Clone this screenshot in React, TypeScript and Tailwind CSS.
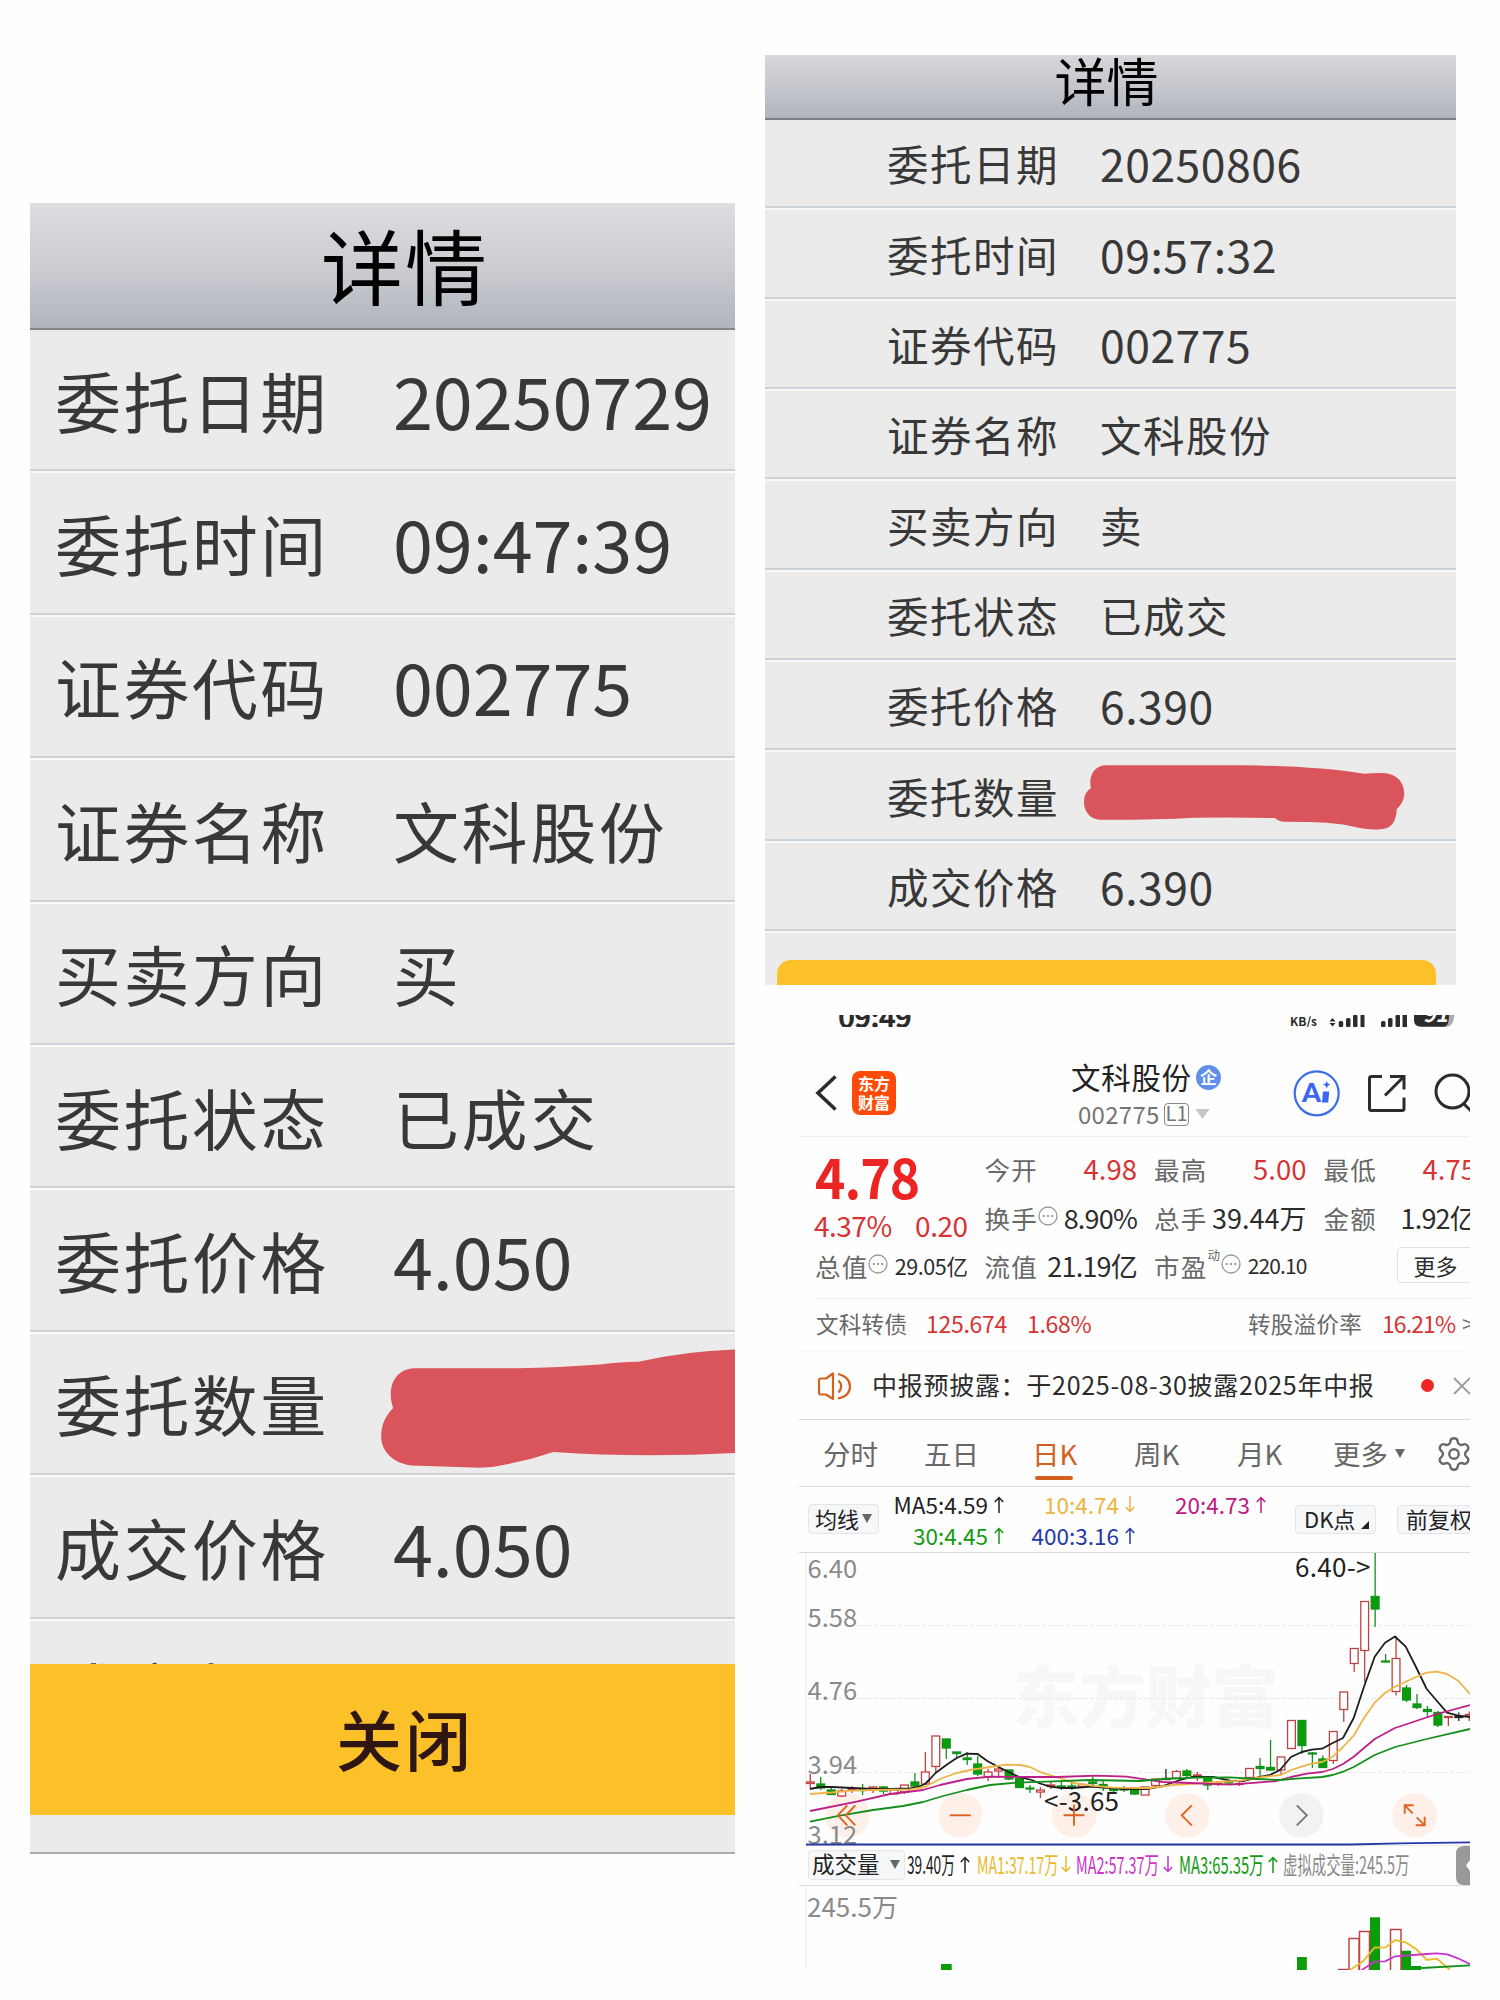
import { ReactNode } from "react"
import { Settings } from "lucide-react"

const leftRows = [
  ["委托日期", "20250729"],
  ["委托时间", "09:47:39"],
  ["证券代码", "002775"],
  ["证券名称", "文科股份"],
  ["买卖方向", "买"],
  ["委托状态", "已成交"],
  ["委托价格", "4.050"],
  ["委托数量", ""],
  ["成交价格", "4.050"],
  ["成交数量", ""],
]

const rightRows = [
  ["委托日期", "20250806"],
  ["委托时间", "09:57:32"],
  ["证券代码", "002775"],
  ["证券名称", "文科股份"],
  ["买卖方向", "卖"],
  ["委托状态", "已成交"],
  ["委托价格", "6.390"],
  ["委托数量", ""],
  ["成交价格", "6.390"],
  ["成交数量", ""],
]

const isNumeric = (value: string) => /^[\d.:]+$/.test(value)

function BuyDetail() {
  return (
    <section className="relative mt-[203px] ml-[30px] flex h-[1651px] w-[705px] shrink-0 flex-col overflow-hidden border-b-2 border-[#a9abad] bg-[#ebebeb]">
      <header className="flex h-[127px] shrink-0 items-center justify-center border-b-2 border-[#85868a] bg-linear-to-b from-[#dddee2] via-[#c9cbd0] via-55% to-[#b0b4bc] pl-[45px] text-[82px] leading-none tracking-[2px] text-black">
        <span className="-mt-[3px]">详情</span>
      </header>
      <div className="h-[1333.5px] shrink-0 overflow-hidden">
        {leftRows.map(([label, value]) => (
          <div
            key={label}
            className="flex h-[143.4px] items-center border-b-2 border-[#f8fafb] pb-[4px] pl-[25px] text-[#383838] shadow-[inset_0_-2px_0_#cbd3d8] last:pb-[2px]"
          >
            <span className="w-[338px] shrink-0 text-[66px] leading-none tracking-[2.4px]">{label}</span>
            <span
              className={
                isNumeric(value)
                  ? "text-[72px] leading-none tracking-[-0.1px] whitespace-nowrap"
                  : "text-[66px] leading-none tracking-[2.6px] whitespace-nowrap"
              }
            >
              {value}
            </span>
          </div>
        ))}
      </div>
      <button className="flex h-[151.5px] shrink-0 items-center justify-center bg-[#fcc128] pl-[45px] text-[66px] leading-none font-medium tracking-[3px] text-[#2f1613]">
        <span className="-mt-[4px]">关闭</span>
      </button>
      {/* marker stroke over the quantity */}
      <svg className="absolute top-[1127px] left-[340px]" width="365" height="160" viewBox="370 1330 365 160">
        <path
          d="M413.7 1368.3H516.6Q560 1367.5 600 1364.5Q625 1361.5 638.5 1361.8Q684 1351 735 1349.4V1453Q640 1458 553.4 1452Q530 1460 507 1464.3Q490 1468.5 473.5 1467.6L411.3 1465.4C392 1463 381 1450 381.2 1436.3C381 1425 386 1415 393.2 1408C386 1388 395 1369 413.7 1368.3Z"
          fill="#da555b"
        />
      </svg>
    </section>
  )
}

function SellDetail() {
  return (
    <section className="relative flex h-[930px] w-[691px] flex-col overflow-hidden bg-[#ebebeb]">
      <header className="flex h-[65px] shrink-0 items-center justify-center border-b-2 border-[#7d7e83] bg-linear-to-b from-[#d6d8db] via-[#c3c5cb] via-55% to-[#b0b4bc] pr-[8px] text-[52px] leading-none text-black">
        <span className="-mt-[14px]">详情</span>
      </header>
      <div className="h-[839.5px] shrink-0 overflow-hidden">
        {rightRows.map(([label, value]) => (
          <div
            key={label}
            className="flex h-[90.35px] items-center border-b-2 border-[#f6f8f9] pl-[122px] text-[#383838] shadow-[inset_0_-2px_0_#cbd3d8] last:pt-[2px]"
          >
            <span className="w-[213px] shrink-0 text-[41.5px] leading-none tracking-[1.5px]">{label}</span>
            <span
              className={
                isNumeric(value)
                  ? "-mt-[1px] text-[44.5px] leading-none tracking-[0.5px] whitespace-nowrap"
                  : "text-[41.5px] leading-none tracking-[1.5px] whitespace-nowrap"
              }
            >
              {value}
            </span>
          </div>
        ))}
      </div>
      <svg className="absolute top-[700px] left-[305px]" width="350" height="80" viewBox="1070 755 350 80">
        <path
          d="M1106.3 765.3H1242.7Q1315 766 1364.6 773.7Q1376 772.5 1386 773.3C1398 775 1404 783 1404.3 794Q1404 802 1396.7 809.3Q1396 829 1380.4 829.3Q1368 830 1359.8 828L1343 824.5Q1325 821.7 1306 822L1284.3 821.7Q1279 821.5 1274.7 818Q1230 817 1194.8 817.7Q1150 820 1099.2 819.7C1089 819 1084 810 1083.9 801.7Q1084 792 1091 788.3C1088 775 1095 765.5 1106.3 765.3Z"
          fill="#da555b"
        />
      </svg>
      <div className="mr-[20px] ml-[12px] h-[26px] shrink-0 rounded-t-[14px] bg-[#fcc128]" />
    </section>
  )
}

function Dots() {
  return (
    <svg className="mt-[-3px] shrink-0" width="20" height="20" viewBox="0 0 20 20">
      <circle cx="10" cy="10" r="9" fill="none" stroke="#999" strokeWidth="1.3" />
      <g fill="#888">
        <circle cx="5.8" cy="10" r="1.1" />
        <circle cx="10" cy="10" r="1.1" />
        <circle cx="14.2" cy="10" r="1.1" />
      </g>
    </svg>
  )
}

function StatusBar() {
  return (
    <div className="flex h-[12px] items-end overflow-hidden pl-[39px] text-[#2c2c2c]">
      <span className="mb-[-2px] w-[452px] text-[29px] leading-[27px] font-bold tracking-[-1px]">09:49</span>
      <span className="mb-[-1px] w-[39px] text-[12px] leading-[14px] font-bold">KB/s</span>
      <svg width="140" height="12" viewBox="1328 1015 140 12">
        <g fill="#2c2c2c">
          <path d="M1328.500 1021.500l3-3.500 3 3.500zM1328.500 1023l3 3.500 3-3.500z" />
          <rect x="1337.700" y="1021" width="4.500" height="6" rx="1.500" />
          <rect x="1345" y="1018" width="4.500" height="9" rx="1.500" />
          <rect x="1352" y="1015" width="4.500" height="12" rx="1" />
          <rect x="1359.500" y="1015" width="4" height="12" />
          <rect x="1380" y="1021" width="4.500" height="6" rx="1.500" />
          <rect x="1387" y="1018" width="4.500" height="9" rx="1.500" />
          <rect x="1394.500" y="1015" width="4.500" height="12" rx="1" />
          <rect x="1401.500" y="1015" width="4.500" height="12" />
        </g>
        <path d="M1436 1015H1453.500Q1452 1026.700 1446 1026.700H1436z" fill="#aaa" />
        <path d="M1413 1015H1448Q1448 1026.700 1443 1026.700H1420Q1413 1026.700 1413 1020z" fill="#2c2c2c" />
        <text x="1422" y="1022" fontSize="21" fontWeight="700" fontStyle="italic" fill="#fff">
          91
        </text>
      </svg>
    </div>
  )
}

function StockHeader() {
  return (
    <div className="mt-[24px] flex h-[86px] items-center border-b border-[#efefef] pb-[1px] pl-[16px]">
      <svg width="22" height="38" viewBox="0 0 22 38" fill="none" stroke="#2c2c2c" strokeWidth="3.600">
        <path d="M20.500 2.500L3 19L20.500 35.500" />
      </svg>
      <div className="ml-[15px] grid size-[44px] grid-rows-2 rounded-[8px] bg-[#ff4a08] py-[3px] text-center text-[16px] leading-[18px] font-bold text-white">
        <span>东方</span>
        <span>财富</span>
      </div>
      <div className="mt-[4px] ml-[175px] flex w-[150px] flex-col">
        <div className="flex h-[38px] items-center">
          <span className="w-[125px] shrink-0 text-[29.5px] leading-none tracking-[0.700px] whitespace-nowrap text-[#222]">文科股份</span>
          <span className="flex size-[25px] shrink-0 items-center justify-center rounded-full bg-[#5f8fe8] pb-[2px] text-[17px] leading-none font-bold text-white">
            企
          </span>
        </div>
        <div className="flex h-[36px] items-center pl-[7px] text-[#757575]">
          <span className="w-[86px] text-[24px] leading-none tracking-[0.3px]">002775</span>
          <span className="flex h-[23px] w-[25px] items-center justify-center rounded-[4px] border border-[#888] pb-[2px] text-[20px] leading-none">
            L1
          </span>
          <svg className="ml-[6px]" width="15" height="10" viewBox="0 0 15 10">
            <path d="M0.500 0h14l-7 10z" fill="#c6c6c6" />
          </svg>
        </div>
      </div>
      <svg className="ml-[70px]" width="179" height="50" viewBox="1291 1068 179 50" fill="none">
        <circle cx="1316.700" cy="1093.300" r="22" stroke="#3d6ceb" strokeWidth="2.200" />
        <text x="1302" y="1102" fontSize="27" fontWeight="900" fill="#3a66f2" className="font-['Lato']">
          A
        </text>
        <path d="M1323 1091.500h6.200l-1 11h-6.200z" fill="#3a66f2" />
        <path d="M1326.700 1081l1.200 2.600 2.600 1-2.600 1.200-1.200 2.600-1.200-2.600-2.600-1.200 2.600-1z" fill="#3a66f2" />
        <g stroke="#2c2c2c" strokeWidth="3">
          <path d="M1382 1076.500H1371.500Q1369.500 1076.500 1369.500 1078.500V1108.500Q1369.500 1110.500 1371.500 1110.500H1402Q1404 1110.500 1404 1108.500V1097.500" />
          <path d="M1390 1076.500H1404V1089.500M1403.500 1077L1385 1095.500" />
          <circle cx="1452.500" cy="1091.500" r="16.500" />
          <path d="M1463.500 1103.500L1472 1112" />
        </g>
      </svg>
    </div>
  )
}

const valueSizes = {
  red: "text-[27.500px] text-[#d63434]",
  dark: "text-[27px] text-[#2c2c2c]",
  tight: "text-[27px] tracking-[-0.800px] text-[#2c2c2c]",
  small: "text-[21.500px] tracking-[-0.400px] text-[#2c2c2c]",
  smaller: "text-[21px] tracking-[-0.900px] text-[#2c2c2c]",
}

function Cell({ label, value, kind, children }: { label: string; value: string; kind: keyof typeof valueSizes; children?: ReactNode }) {
  return (
    <div className="flex h-[48.300px] w-[152.500px] items-center justify-between leading-none whitespace-nowrap">
      <span className="flex items-center text-[25.500px] tracking-[1.200px] text-[#686868]">
        {label}
        {children}
      </span>
      <span className={valueSizes[kind]}>{value}</span>
    </div>
  )
}

function Quote() {
  return (
    <div className="ml-[16px] flex h-[162px] gap-[17px] border-b border-[#efefef] pt-[8px]">
      <div className="w-[152.500px] shrink-0">
        <div className="flex h-[60px] items-center text-[56px] leading-none font-bold tracking-[-1px] text-[#ec2424]">
          <span className="-mt-[1px] origin-left scale-x-[0.920]">4.78</span>
        </div>
        <div className="flex h-[36.600px] items-center justify-between pt-[4px] text-[28px] leading-none tracking-[-0.500px] text-[#d63434]">
          <span className="-ml-[1px]">4.37%</span>
          <span>0.20</span>
        </div>
        <Cell label="总值" value="29.05亿" kind="small">
          <Dots />
        </Cell>
      </div>
      <div className="shrink-0">
        <Cell label="今开" value="4.98" kind="red" />
        <Cell label="换手" value="8.90%" kind="tight">
          <Dots />
        </Cell>
        <Cell label="流值" value="21.19亿" kind="tight" />
      </div>
      <div className="shrink-0">
        <Cell label="最高" value="5.00" kind="red" />
        <Cell label="总手" value="39.44万" kind="dark" />
        <Cell label="市盈" value="220.10" kind="smaller">
          <span className="mr-[1px] mb-[21px] text-[12.500px] tracking-normal">动</span>
          <Dots />
        </Cell>
      </div>
      <div className="shrink-0">
        <Cell label="最低" value="4.75" kind="red" />
        <Cell label="金额" value="1.92亿" kind="tight" />
        <div className="mt-[5px] ml-[73px] flex h-[36px] w-[90px] items-center rounded-[4px] border border-[#e1e1e1] pl-[16px] text-[22px] leading-none text-[#2c2c2c]">
          更多
        </div>
      </div>
    </div>
  )
}

function BondRow() {
  return (
    <div className="flex h-[53px] items-center border-b border-[#f7f7f7] pb-[3px] pl-[17px] text-[23px] leading-none tracking-[-0.300px] whitespace-nowrap text-[#d63434]">
      <span className="w-[110px] shrink-0 text-[22.500px] tracking-[0.300px] text-[#686868]">文科转债</span>
      <span className="w-[101px] shrink-0">125.674</span>
      <span className="w-[221px] shrink-0">1.68%</span>
      <span className="w-[134px] shrink-0 text-[22.500px] tracking-[0.300px] text-[#686868]">转股溢价率</span>
      <span className="w-[80px] shrink-0 tracking-[-0.900px]">16.21%</span>
      <span className="text-[#777]">&gt;</span>
    </div>
  )
}

function NoticeRow() {
  return (
    <div className="flex h-[68px] items-center border-b border-[#dadada] pl-[18px]">
      <svg className="shrink-0" width="36" height="30" viewBox="817 1370 36 30" fill="none" stroke="#d2601e" strokeWidth="2.200">
        <path d="M833 1372.500V1398L826 1393.500H821Q819 1393.500 819 1391.500V1379.500Q819 1377.500 821 1377.500H826Z" strokeLinejoin="round" />
        <path d="M838.500 1379.500Q844 1385 838.500 1391.500M838 1373Q850 1376 850 1385.500T838 1397.500" />
      </svg>
      <span className="-mt-[2px] ml-[19px] w-[549px] shrink-0 text-[25px] leading-none tracking-[0.720px] whitespace-nowrap text-[#2c2c2c]">
        中报预披露：于2025-08-30披露2025年中报
      </span>
      <span className="size-[12.500px] shrink-0 rounded-full bg-[#f02525]" />
      <svg className="ml-[18px] shrink-0" width="20" height="20" viewBox="0 0 20 20" stroke="#9a9a9a" strokeWidth="1.800">
        <path d="M2 2L18 18M18 2L2 18" />
      </svg>
    </div>
  )
}

function Caret({ className }: { className?: string }) {
  return (
    <svg className={className} width="10" height="9" viewBox="0 0 10 9">
      <path d="M0 0h10l-5 9z" fill="#666" />
    </svg>
  )
}

function Tabs() {
  return (
    <div className="flex h-[67px] items-center border-b border-[#dadada] pt-[1px] pl-[24px] text-[27.500px] leading-none whitespace-nowrap text-[#686868]">
      <span className="w-[101px] shrink-0">分时</span>
      <span className="w-[108px] shrink-0">五日</span>
      <span className="relative w-[102px] shrink-0 text-[#d2601e]">
        日K
        <span className="absolute top-[36.500px] left-[3px] h-[4px] w-[38px] rounded-full bg-[#d2601e]" />
      </span>
      <span className="w-[103px] shrink-0">周K</span>
      <span className="w-[96px] shrink-0">月K</span>
      <span className="shrink-0">更多</span>
      <Caret className="ml-[7px] shrink-0" />
      <Settings className="ml-[30px] shrink-0" size={38} strokeWidth={1.500} color="#686868" />
    </div>
  )
}

const averages = [
  ["MA5:4.59", "↑", "text-[#222] w-[132px]"],
  ["10:4.74", "↓", "text-[#ecb440] w-[131px]"],
  ["20:4.73", "↑", "text-[#c01882] w-[131px]"],
  ["30:4.45", "↑", "text-[#129a12] w-[132px]"],
  ["400:3.16", "↑", "text-[#2438a6] w-[131px]"],
]

function Arrow({ dir }: { dir: string }) {
  return (
    <svg className="ml-[6px] shrink-0" width="10" height="17" viewBox="0 0 10 17" fill="none" stroke="currentColor" strokeWidth="1.500">
      {dir === "↑" ? <path d="M5 17V1.500M0.800 6L5 1.500L9.200 6" /> : <path d="M5 0V15.500M0.800 11L5 15.500L9.200 11" />}
    </svg>
  )
}

function AverageRow() {
  return (
    <div className="flex h-[66px] items-center border-b border-[#dadada] pl-[9px] text-[22px] leading-none whitespace-nowrap">
      <div className="mt-[-1px] flex h-[30px] w-[71px] shrink-0 items-center rounded-[4px] border border-[#e3e5ea] bg-[#f6f7f9] pb-[3px] pl-[6px] text-[#222]">
        均线
        <Caret className="mt-[2px] ml-[3px]" />
      </div>
      <div className="-ml-[7px] flex w-[394px] shrink-0 flex-wrap gap-y-[7px] text-[22.500px]">
        {averages.map(([text, dir, style]) => (
          <span key={text} className={`flex h-[24px] items-center justify-end ${style}`}>
            {text}
            <Arrow dir={dir} />
          </span>
        ))}
      </div>
      <div className="mt-[-1px] ml-[29px] flex h-[29px] w-[81px] shrink-0 items-center rounded-[4px] border border-[#e3e5ea] bg-[#f6f7f9] pb-[3px] pl-[8px] text-[#222]">
        DK点
        <svg className="mt-[14px] ml-[6px] shrink-0" width="8" height="8" viewBox="0 0 8 8">
          <path d="M8 0V8H0z" fill="#222" />
        </svg>
      </div>
      <div className="mt-[-1px] ml-[21px] flex h-[29px] w-[90px] shrink-0 items-center rounded-[4px] border border-[#e3e5ea] bg-[#f6f7f9] pb-[3px] pl-[8px] text-[#222]">
        前复权
      </div>
    </div>
  )
}

// kind, high, body top, body bottom, low: one entry per trading day
type Candle = [string, number, number, number, number]
const candles: Candle[] = [
  ["r", 1774, 1782, 1783.5, 1789],
  ["g", 1777, 1784, 1788, 1790],
  ["g", 1788, 1790, 1794.5, 1795],
  ["r", 1789, 1791, 1796, 1797],
  ["r", 1786, 1788.5, 1789.5, 1793],
  ["g", 1784, 1789.5, 1790.5, 1795],
  ["r", 1786, 1787, 1788.5, 1793],
  ["g", 1786, 1787, 1791, 1794],
  ["r", 1788, 1790, 1794, 1794],
  ["r", 1785, 1785, 1792, 1794],
  ["g", 1773, 1782, 1786, 1787],
  ["r", 1752, 1772, 1784, 1785],
  ["r", 1736, 1736, 1766.5, 1772],
  ["g", 1739, 1739, 1748, 1759],
  ["g", 1752, 1752, 1753.5, 1758],
  ["g", 1752, 1758, 1759.5, 1765],
  ["g", 1756, 1764, 1774, 1776],
  ["r", 1769, 1772, 1777, 1781],
  ["r", 1766, 1769, 1771, 1778],
  ["g", 1770, 1770, 1779, 1780],
  ["g", 1777, 1778, 1787.5, 1788],
  ["g", 1785, 1788, 1789, 1793],
  ["r", 1787, 1790, 1792, 1798],
  ["r", 1781, 1785, 1786, 1789],
  ["g", 1782, 1786, 1787, 1790],
  ["g", 1781, 1786, 1787, 1790],
  ["r", 1783, 1784.5, 1786.5, 1788],
  ["g", 1777, 1782, 1783.5, 1788],
  ["g", 1781, 1784.5, 1786, 1791],
  ["g", 1787, 1788.5, 1790.5, 1792],
  ["g", 1786, 1789, 1790, 1792],
  ["g", 1789, 1789.5, 1794, 1795],
  ["r", 1787, 1787, 1795, 1795],
  ["r", 1779, 1779, 1785.5, 1785.5],
  ["k", 1769, 1778.5, 1779.5, 1779],
  ["r", 1770, 1771.5, 1778, 1778],
  ["g", 1769, 1771, 1775.5, 1779],
  ["r", 1772, 1775, 1776, 1781],
  ["g", 1776, 1777, 1785, 1790],
  ["r", 1781, 1783.5, 1784.5, 1786],
  ["g", 1780, 1782, 1783, 1784],
  ["r", 1781, 1783.5, 1784.5, 1786],
  ["r", 1768.5, 1768.5, 1777.5, 1777.5],
  ["g", 1758, 1766.5, 1768.5, 1776],
  ["g", 1740, 1767.5, 1770, 1771],
  ["r", 1757, 1757, 1770, 1775],
  ["r", 1720.5, 1720.5, 1748.5, 1748.5],
  ["g", 1720, 1720.5, 1745.5, 1754],
  ["g", 1752, 1753, 1754, 1768],
  ["g", 1755.5, 1759, 1767.5, 1768],
  ["r", 1731.5, 1731.5, 1760.5, 1764],
  ["r", 1692, 1692, 1709.5, 1722],
  ["r", 1648.5, 1648.5, 1663.5, 1672],
  ["r", 1601.5, 1601.5, 1650.5, 1682],
  ["g", 1552.5, 1596.5, 1609, 1627],
  ["g", 1654, 1661, 1662, 1662],
  ["r", 1636, 1658.5, 1691.5, 1695.5],
  ["g", 1685, 1688, 1700, 1702],
  ["g", 1694, 1704, 1707.5, 1709],
  ["g", 1706, 1709.5, 1711.5, 1717],
  ["g", 1711, 1712.5, 1725, 1727],
  ["r", 1716, 1716.5, 1717.5, 1726],
  ["k", 1712.5, 1716.5, 1717.5, 1721],
  ["r", 1711.5, 1714.5, 1716, 1721],
]

const strokes: Record<string, string> = { r: "#bf4343", g: "#12921a", k: "#222" }

const lines = [
  ["#1e1e1e", "810,1789 820,1787 832,1787 852,1788 873,1789 890,1789 910,1788.5 918,1787 925,1784 930,1779 935.5,1773 946.7,1764.7 956.7,1758 966.7,1753.700 977.7,1754 987.3,1761 998,1766.7 1008,1771.7 1019.3,1777 1031.7,1780 1040,1783.5 1050,1786.700 1061.7,1788 1073,1788 1091.7,1786.7 1103,1787.7 1123,1789 1146.7,1789 1163,1786 1180,1780 1191.7,1777 1213,1777 1230,1780.7 1243,1781 1260,1777 1270,1775 1280,1770 1291,1757 1301.7,1752 1311.7,1749.7 1322,1748.7 1332.7,1743 1343,1738 1353.7,1718 1364,1686.7 1374.7,1656.7 1385,1642.7 1395,1636.5 1405.7,1646.7 1416,1667 1426.7,1689 1437,1701 1447,1712.7 1458,1715.7 1470,1717"],
  ["#edb548", "810,1794 832,1792.5 852,1790.7 873,1790 910,1789.3 925,1787 940,1779 956.7,1773 970,1770 990,1767 1006.7,1764.7 1020,1765 1030,1767 1041.7,1772.7 1063,1779 1073,1783 1091.7,1785.7 1113,1787.7 1140,1788 1150,1788 1173,1785 1196.7,1783.5 1216.7,1782 1237,1781 1263,1777 1280.7,1775 1291,1770 1301.7,1766.7 1311.7,1763.7 1322,1762 1332.7,1756.7 1343,1747 1353.7,1735.7 1364,1718 1374.7,1702.7 1385,1693 1395,1686.7 1416,1677 1426.7,1672.700 1437,1671.7 1447,1674 1458,1680.7 1470,1694"],
  ["#bd1f86", "810,1811 856.7,1801.7 890,1794 923,1790 940,1785 966.7,1779 990,1776.7 1023,1777 1056.7,1777 1096.7,1775.7 1126.7,1776.7 1140,1778.700 1163,1782 1190,1783 1230,1784.7 1256.7,1782.7 1276.7,1781 1291,1777 1306.7,1773.7 1322,1772 1332.7,1769 1343,1764 1353.7,1756.7 1374.7,1739 1395,1728 1416,1721 1437,1714 1470,1705"],
  ["#158f1c", "810,1821.7 840,1815.7 873,1810 903,1806 923,1802 943,1796 966.7,1790 990,1785 1016.7,1782.7 1046.7,1781.7 1090,1780 1140,1781 1163,1779 1196.7,1777.7 1230,1777.300 1256.7,1779 1280,1780 1296.7,1778.7 1322,1777 1332.7,1775 1343,1771.7 1353.7,1767 1374.7,1755 1395,1747 1426.7,1739 1470,1729"],
  ["#2438a6", "806,1844.5 1350,1844.5 1400,1843.300 1470,1842.3"],
]

const buttons = [
  { x: 847.3, d: "M8 -10L-1.500 0L8 10M0 -10L-9.500 0L0 10" },
  { x: 960.3, d: "M-10.500 0H10.500" },
  { x: 1074, d: "M-10.500 0H10.500M0 -10.500V10.500" },
  { x: 1187.3, d: "M4.500 -10L-5.500 0L4.500 10" },
  { x: 1301.3, d: "M-4.500 -10L5.500 0L-4.500 10", muted: true },
  { x: 1414.7, d: "M-10 -1.500V-10H-1M-10 -10L-2 -2M10 1.500V10H1M10 10L2 2" },
]

const priceLabels: [string, number][] = [
  ["6.40", 1577.5],
  ["5.58", 1626.5],
  ["4.76", 1700],
  ["3.94", 1773.5],
  ["3.12", 1844],
]

function PriceChart() {
  return (
    <svg className="block" width="671" height="293" viewBox="799 1553 671 293">
      <text x="1012.500" y="1722" fontSize="66.500" fontWeight="900" fill="#f7f7f7">
        东方财富
      </text>
      <path d="M806 1553V1846M806 1845.500H1470" stroke="#ececec" />
      <path d="M808 1625.500H1470M808 1698.500H1470M808 1772.500H1470" stroke="#e9e9e9" strokeDasharray="4 2" />
      {buttons.map((b) => (
        <circle key={b.x} cx={b.x} cy="1815.300" r="22.300" fill={b.muted ? "#f2f2f2" : "#fef0e8"} />
      ))}
      {priceLabels.map(([text, y]) => (
        <text key={text} x="807.500" y={y} fontSize="25.500" fill="#8a8a8a">
          {text}
        </text>
      ))}
      {candles.map(([kind, high, top, bottom, low], i) => {
        const x = 810.3 + i * 10.46
        const color = strokes[kind]
        return (
          <g key={i} stroke={color} strokeWidth="1.300">
            <path d={`M${x} ${high}V${top}M${x} ${bottom}V${low}`} />
            <rect
              x={x - 3.900}
              y={top}
              width="7.800"
              height={bottom - top}
              fill={kind === "r" ? "#fff" : kind === "g" ? "#0a9d0a" : "#222"}
            />
          </g>
        )
      })}
      {lines.map(([color, points]) => (
        <polyline key={color} points={points} fill="none" stroke={color} strokeWidth="1.800" strokeLinejoin="round" />
      ))}
      <text x="1295" y="1577" fontSize="26" letterSpacing="0.300" fill="#222">
        6.40-&gt;
      </text>
      <text x="1044" y="1811" fontSize="26" letterSpacing="0.200" fill="#222">
        &lt;-3.65
      </text>
      {buttons.map((b) => (
        <path
          key={b.x}
          d={b.d}
          transform={`translate(${b.x} 1815.300)`}
          fill="none"
          stroke={b.muted ? "#777" : "#dd6420"}
          strokeWidth="1.900"
        />
      ))}
    </svg>
  )
}

const volumes = [
  ["39.40万", "↑", "w-[47px]", "w-[70px] text-[#222]", "scale-x-[0.570]"],
  ["MA1:37.17万", "↓", "w-[78px]", "w-[99px] text-[#e6bb2c]", "scale-x-[0.590]"],
  ["MA2:57.37万", "↓", "w-[81px]", "w-[103px] text-[#c935c9]", "scale-x-[0.600]"],
  ["MA3:65.35万", "↑", "w-[83px]", "w-[104px] text-[#129a12]", "scale-x-[0.615]"],
]

function VolumeHeader() {
  return (
    <div className="flex h-[40px] items-center border-b border-[#dadada] pb-[1px] pl-[9px] text-[24px] leading-none whitespace-nowrap">
      <div className="mt-[-1px] flex h-[30px] w-[97px] shrink-0 items-center rounded-[4px] border border-[#e3e5ea] bg-[#f6f7f9] pb-[2px] pl-[3px] text-[22.500px] text-[#222]">
        成交量
        <Caret className="mt-[2px] ml-[10px]" />
      </div>
      <span className="w-[2px] shrink-0" />
      {volumes.map(([text, dir, textWidth, style, scale]) => (
        <span key={text} className={`flex shrink-0 items-center pb-[2px] ${style}`}>
          <span className={`shrink-0 ${textWidth}`}>
            <span className={`inline-block origin-left ${scale}`}>{text}</span>
          </span>
          <Arrow dir={dir} />
        </span>
      ))}
      <span className="flex w-[173px] shrink-0 pb-[2px] text-[#8a8a8a]">
        <span className="origin-left scale-x-[0.600]">虚拟成交量:245.5万</span>
      </span>
      <svg className="shrink-0" width="14" height="39" viewBox="0 0 14 39">
        <path d="M14 0H8Q0 0 0 8V31Q0 39 8 39H14z" fill="#999" />
        <path d="M14 14L10 19.500L14 25z" fill="#fff" />
      </svg>
    </div>
  )
}

function VolumeChart() {
  return (
    <svg className="block" width="671" height="84" viewBox="799 1886 671 84">
      <path d="M806 1886V1970" stroke="#ececec" />
      <text x="807" y="1917" fontSize="26" fill="#8a8a8a">
        245.5万
      </text>
      <g fill="#0a9d0a">
        <rect x="941" y="1964" width="10.700" height="6" />
        <rect x="1297" y="1957" width="9.800" height="13" />
        <rect x="1370" y="1917.300" width="10" height="53" />
        <rect x="1401" y="1950.700" width="10" height="20" />
        <rect x="1411" y="1966" width="10.500" height="4" />
      </g>
      <g fill="none" stroke="#bf4343" strokeWidth="1.500">
        <path d="M1338 1969.500H1349V1938.500H1359V1970M1359.500 1970V1931.500H1369.500V1970M1390.500 1970V1929.500H1401V1970" />
      </g>
      <g fill="none" strokeWidth="1.800">
        <polyline stroke="#e6bb2c" points="1350,1970 1363.300,1961 1374.700,1947.300 1385,1947.700 1395.300,1940 1405.700,1942.300 1416,1949 1426.700,1960 1437,1958.700 1450,1970" />
        <polyline stroke="#c935c9" points="1361.700,1970 1374.700,1961.700 1385,1961.300 1395.300,1956.300 1426.700,1954 1437,1953.300 1447.300,1954.300 1458,1958.300 1470,1964.300" />
        <polyline stroke="#158f1c" points="1421.700,1968 1470,1965.300" />
      </g>
    </svg>
  )
}

export default function App() {
  return (
    <main className="flex h-[2000px] w-[1500px] overflow-hidden bg-[#fefefe] font-['Noto_Sans_CJK_SC',sans-serif]">
      <BuyDetail />
      <div className="mt-[55px] ml-[30px] flex flex-col">
        <SellDetail />
        <section className="mt-[30px] ml-[34px] h-[955px] w-[671px] overflow-hidden">
          <StatusBar />
          <StockHeader />
          <Quote />
          <BondRow />
          <NoticeRow />
          <Tabs />
          <AverageRow />
          <PriceChart />
          <VolumeHeader />
          <VolumeChart />
        </section>
      </div>
    </main>
  )
}
